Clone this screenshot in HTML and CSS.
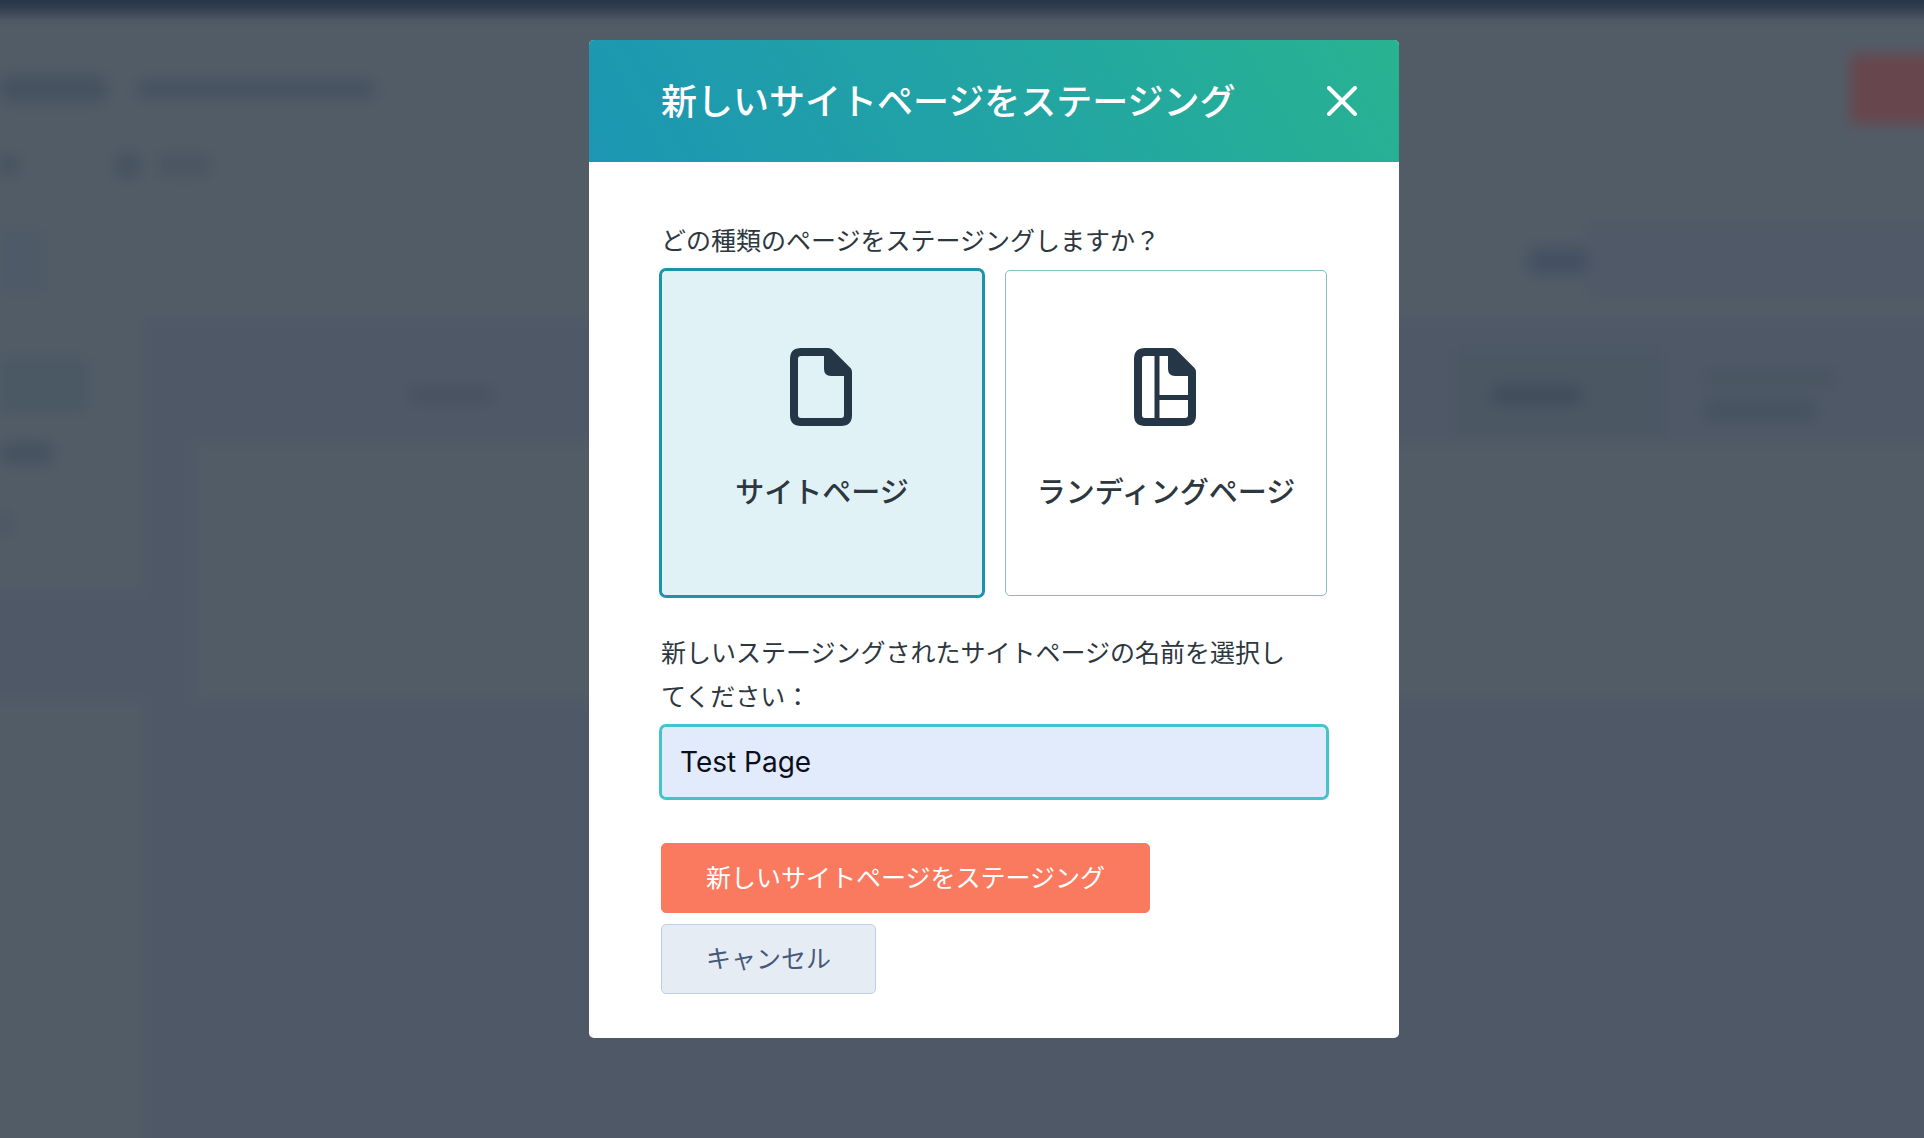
FILE: index.html
```html
<!DOCTYPE html>
<html lang="ja">
<head>
    <meta charset="UTF-8">
    <meta name="viewport" content="width=device-width, initial-scale=1.0">
    <title>新しいサイトページをステージング</title>
    <link rel="stylesheet" href="styles.css">
</head>
<body>
    <!-- blurred page behind the dialog -->
    <div class="page" aria-hidden="true">
        <div class="topbar"></div>
        <div class="page-header">
            <div class="heading">
                <span class="smudge smudge-title"></span>
                <span class="smudge smudge-subtitle"></span>
                <span class="page-action"></span>
            </div>
            <div class="tabs">
                <span class="smudge smudge-tab"></span>
                <span class="smudge smudge-tab-icon"></span>
                <span class="smudge smudge-tab-wide"></span>
            </div>
            <div class="filters">
                <span class="filter-box"></span>
                <span class="smudge smudge-filter"></span>
                <span class="search-box"></span>
            </div>
        </div>
        <div class="content">
            <div class="sidebar">
                <div class="side-nav">
                    <span class="side-active"></span>
                    <span class="smudge smudge-nav"></span>
                    <span class="smudge smudge-nav-short"></span>
                </div>
                <div class="side-rest"></div>
            </div>
            <div class="list">
                <div class="list-head">
                    <span class="smudge smudge-name"></span>
                    <div class="sorted"><span class="smudge smudge-sorted"></span></div>
                    <div class="two-lines">
                        <span class="smudge smudge-line"></span>
                        <span class="smudge smudge-line-strong"></span>
                    </div>
                </div>
                <div class="list-body"></div>
            </div>
        </div>
    </div>

    <div class="overlay">
        <div class="modal" role="dialog" aria-modal="true" aria-labelledby="modalTitle">
            <div class="modal-header">
                <h2 id="modalTitle">新しいサイトページをステージング</h2>
                <button class="close" type="button" aria-label="閉じる">
                    <svg width="30" height="30" viewBox="0 0 30 30">
                        <path d="M2 2L28 28M28 2L2 28" stroke="currentColor" stroke-width="4" stroke-linecap="round"/>
                    </svg>
                </button>
            </div>
            <form class="modal-body">
                <fieldset class="type-group">
                    <legend>どの種類のページをステージングしますか？</legend>
                    <div class="cards">
                        <label class="card">
                            <input type="radio" name="pageType" value="site" checked>
                            <svg class="card-icon" width="64" height="78" viewBox="0 0 64 78">
                                <path fill="currentColor" fill-rule="evenodd" d="M11 0H38Q40.500 0 42 1.500L60.500 20Q62 21.500 62 24V67Q62 78 51 78H11Q0 78 0 67V11Q0 0 11 0ZM11 8Q8 8 8 11V67Q8 70 11 70H51Q54 70 54 67V28H41Q34 28 34 21V8Z"/>
                            </svg>
                            <span>サイトページ</span>
                        </label>
                        <label class="card">
                            <input type="radio" name="pageType" value="landing">
                            <svg class="card-icon" width="64" height="78" viewBox="0 0 64 78">
                                <path fill="currentColor" fill-rule="evenodd" d="M11 0H38Q40.500 0 42 1.500L60.500 20Q62 21.500 62 24V67Q62 78 51 78H11Q0 78 0 67V11Q0 0 11 0ZM11 8Q8 8 8 11V67Q8 70 11 70H51Q54 70 54 67V28H41Q34 28 34 21V8Z"/>
                                <path fill="currentColor" d="M20.500 7H25.500V47H55V52H25.500V71H20.500Z"/>
                            </svg>
                            <span>ランディングページ</span>
                        </label>
                    </div>
                </fieldset>
                <label class="name-label" for="pageName">新しいステージングされたサイトページの名前を選択してください：</label>
                <input class="name-input" id="pageName" type="text" value="Test Page">
                <div class="actions">
                    <button class="btn btn-primary" type="submit">新しいサイトページをステージング</button>
                    <button class="btn btn-secondary" type="button">キャンセル</button>
                </div>
            </form>
        </div>
    </div>
</body>
</html>
```

FILE: styles.css
```css
* {
    margin: 0;
    padding: 0;
    box-sizing: border-box;
}

body {
    font-family: "Noto Sans CJK JP", sans-serif;
    font-size: 25px;
    line-height: 44px;
    color: #2d3740;
    background: #4e5867;
    min-height: 100vh;
    overflow: hidden;
}

/* runs past the window so that the blur has no visible rim */
.page {
    position: fixed;
    inset: -16px;
    display: flex;
    flex-direction: column;
    background: #4e5867;
    filter: blur(7px);
}

.topbar {
    height: 29px;
    background: #293648;
}

.page-header {
    height: 307px;
    padding-left: 16px;
    background: #525c67;
}

.smudge {
    display: block;
    height: 22px;
    border-radius: 8px;
    background: #465260;
}

.heading {
    display: flex;
    align-items: center;
    gap: 30px;
    padding-top: 40px;
    height: 112px;
}

.smudge-title {
    width: 106px;
    height: 28px;
}

.smudge-subtitle {
    width: 240px;
    height: 18px;
}

.page-action {
    width: 90px;
    height: 70px;
    margin-left: auto;
    background: #68464d;
}

.tabs {
    display: flex;
    align-items: center;
    height: 80px;
}

.smudge-tab {
    width: 18px;
}

.smudge-tab-icon {
    width: 24px;
    height: 26px;
    margin-left: 98px;
}

.smudge-tab-wide {
    width: 52px;
    margin-left: 18px;
    background: #4a5561;
}

.filters {
    display: flex;
    align-items: center;
    height: 112px;
}

.filter-box {
    width: 44px;
    height: 66px;
    background: #4e5a67;
}

.smudge-filter {
    width: 60px;
    height: 28px;
    margin-left: auto;
    background: #455163;
}

.search-box {
    width: 352px;
    height: 74px;
    background: #4f5967;
}

.content {
    display: flex;
    flex: 1;
}

.sidebar {
    display: flex;
    flex-direction: column;
    gap: 108px;
    width: 161px;
}

.side-nav {
    display: flex;
    flex-direction: column;
    gap: 28px;
    height: 272px;
    padding: 36px 0 0 16px;
    background: #525c67;
}

.side-active {
    width: 88px;
    height: 58px;
    background: #4b5965;
}

.smudge-nav {
    width: 54px;
}

.smudge-nav-short {
    width: 8px;
    margin-top: 20px;
}

.side-rest {
    flex: 1;
    background: #525c67;
}

.list {
    flex: 1;
    padding-left: 48px;
}

.list-head {
    display: flex;
    align-items: center;
    height: 122px;
    padding: 28px 88px 0 0;
}

.smudge-name {
    width: 84px;
    height: 18px;
    margin-left: 216px;
    background: #485260;
}

.sorted {
    display: flex;
    align-items: center;
    width: 210px;
    height: 92px;
    margin-left: auto;
    background: #4c5764;
}

.smudge-sorted {
    width: 90px;
    height: 20px;
    margin-left: 38px;
    background: #424d5b;
}

.two-lines {
    margin: 0 16px 0 40px;
}

.smudge-line {
    width: 132px;
    height: 18px;
    margin-bottom: 14px;
    background: #4a5562;
}

.smudge-line-strong {
    width: 112px;
    height: 20px;
}

.list-body {
    height: 260px;
    background: #525c67;
}

.overlay {
    position: relative;
    display: flex;
    justify-content: center;
    align-items: flex-start;
    padding: 40px 0 40px 64px;
}

.modal {
    width: 100%;
    max-width: 810px;
    background: #fff;
    border-radius: 5px;
    overflow: hidden;
}

.modal-header {
    display: flex;
    justify-content: space-between;
    align-items: center;
    padding: 37px 36px 37px 72px;
    color: #fff;
    background: linear-gradient(60deg, #1c96b3, #22a4a4 50%, #28b391);
}

.modal-header h2 {
    padding-bottom: 4px;
    font-size: 36px;
    font-weight: 500;
    line-height: 44px;
}

.close {
    display: flex;
    padding: 6px;
    color: #fff;
    background: none;
    border: none;
    cursor: pointer;
}

.modal-body {
    padding: 55px 72px 44px;
}

.type-group {
    border: none;
}

.cards {
    display: grid;
    grid-template-columns: 1fr 1fr;
    gap: 22px;
    margin-top: 9px;
}

.card {
    display: flex;
    flex-direction: column;
    align-items: center;
    gap: 42px;
    padding: 77px 0 83px;
    font-size: 29px;
    font-weight: 500;
    border: 1px solid #86bcc6;
    border-radius: 5px;
    cursor: pointer;
}

.card input {
    position: absolute;
    opacity: 0;
}

.card:has(input:checked) {
    background: #e1f2f7;
    border-color: #1b93a9;
    box-shadow: 0 0 0 2px #1b93a9;
}

.card-icon {
    color: #253746;
}

.name-label {
    display: block;
    margin-top: 33px;
    padding-right: 24px;
}

.name-input {
    display: block;
    width: 100%;
    height: 72px;
    margin-top: 9px;
    padding: 0 18px;
    font-family: Inter, "Noto Sans CJK JP", sans-serif;
    font-size: 28px;
    color: #0b0f1c;
    background: #e2ebfb;
    border: 1px solid #45c3cd;
    border-radius: 5px;
    outline: none;
    box-shadow: 0 0 0 2px #45c3cd;
}

.actions {
    display: flex;
    flex-direction: column;
    align-items: flex-start;
    gap: 11px;
    margin-top: 45px;
}

.btn {
    padding: 10px 44px 14px;
    font-family: inherit;
    font-size: 25px;
    line-height: 44px;
    border: 1px solid;
    border-radius: 5px;
    cursor: pointer;
}

.btn-primary {
    color: #fff;
    background: #fa7a60;
    border-color: #fa7a60;
}

.btn-secondary {
    color: #46597a;
    background: #e6ecf4;
    border-color: #c0cee2;
}
```
